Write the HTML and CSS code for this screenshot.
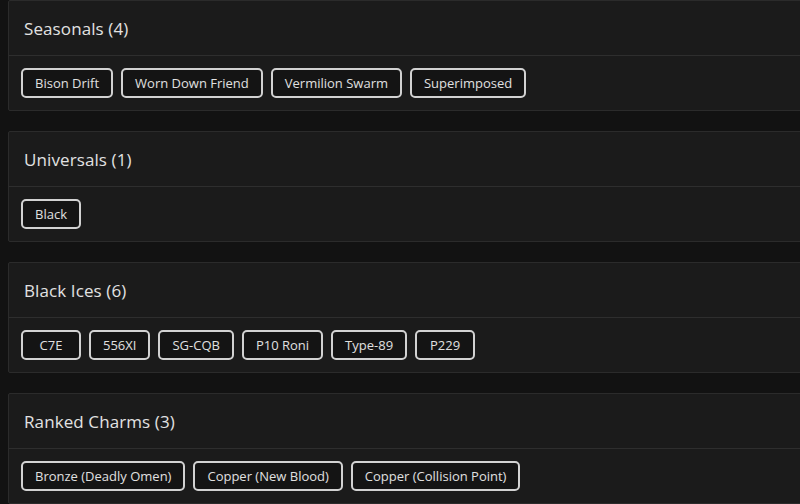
FILE: index.html
```html
<!DOCTYPE html>
<html>
<head>
<meta charset="utf-8">
<link rel="stylesheet" href="styles.css">
</head>
<body>
<div class="list">
  <section class="card">
    <div class="card-head">Seasonals (4)</div>
    <div class="card-body">
      <span class="tag">Bison Drift</span>
      <span class="tag">Worn Down Friend</span>
      <span class="tag">Vermilion Swarm</span>
      <span class="tag">Superimposed</span>
    </div>
  </section>
  <section class="card">
    <div class="card-head">Universals (1)</div>
    <div class="card-body">
      <span class="tag">Black</span>
    </div>
  </section>
  <section class="card">
    <div class="card-head">Black Ices (6)</div>
    <div class="card-body">
      <span class="tag">C7E</span>
      <span class="tag">556XI</span>
      <span class="tag">SG-CQB</span>
      <span class="tag">P10 Roni</span>
      <span class="tag">Type-89</span>
      <span class="tag">P229</span>
    </div>
  </section>
  <section class="card">
    <div class="card-head">Ranked Charms (3)</div>
    <div class="card-body">
      <span class="tag">Bronze (Deadly Omen)</span>
      <span class="tag">Copper (New Blood)</span>
      <span class="tag">Copper (Collision Point)</span>
    </div>
  </section>
</div>
</body>
</html>
```

FILE: styles.css
```css
html, body {
  margin: 0;
  padding: 0;
  background: #121212;
  overflow: hidden;
}
body {
  font-family: "Open Sans", "Noto Sans", sans-serif;
  color: #e2e2e2;
}
.list {
  display: flex;
  flex-direction: column;
  gap: 20px;
  padding-left: 8px;
}
.card {
  width: 830px;
  background: #1b1b1b;
  border: 1px solid #2b2b2b;
  border-radius: 2px;
}
.card-head {
  height: 54px;
  padding: 0 15px;
  display: flex;
  align-items: center;
  font-size: 17px;
  font-weight: 500;
  letter-spacing: 0.1px;
  border-bottom: 1px solid #2e2e2e;
}
.card-body {
  padding: 12px 12px 12px;
  display: flex;
  gap: 8px;
}
.tag {
  box-sizing: border-box;
  height: 30px;
  min-width: 60px;
  display: inline-flex;
  align-items: center;
  justify-content: center;
  padding: 0 12px;
  border: 2px solid #d2d2d2;
  border-radius: 5px;
  background: #141414;
  font-size: 13px;
  color: #e0e0e0;
}
```
